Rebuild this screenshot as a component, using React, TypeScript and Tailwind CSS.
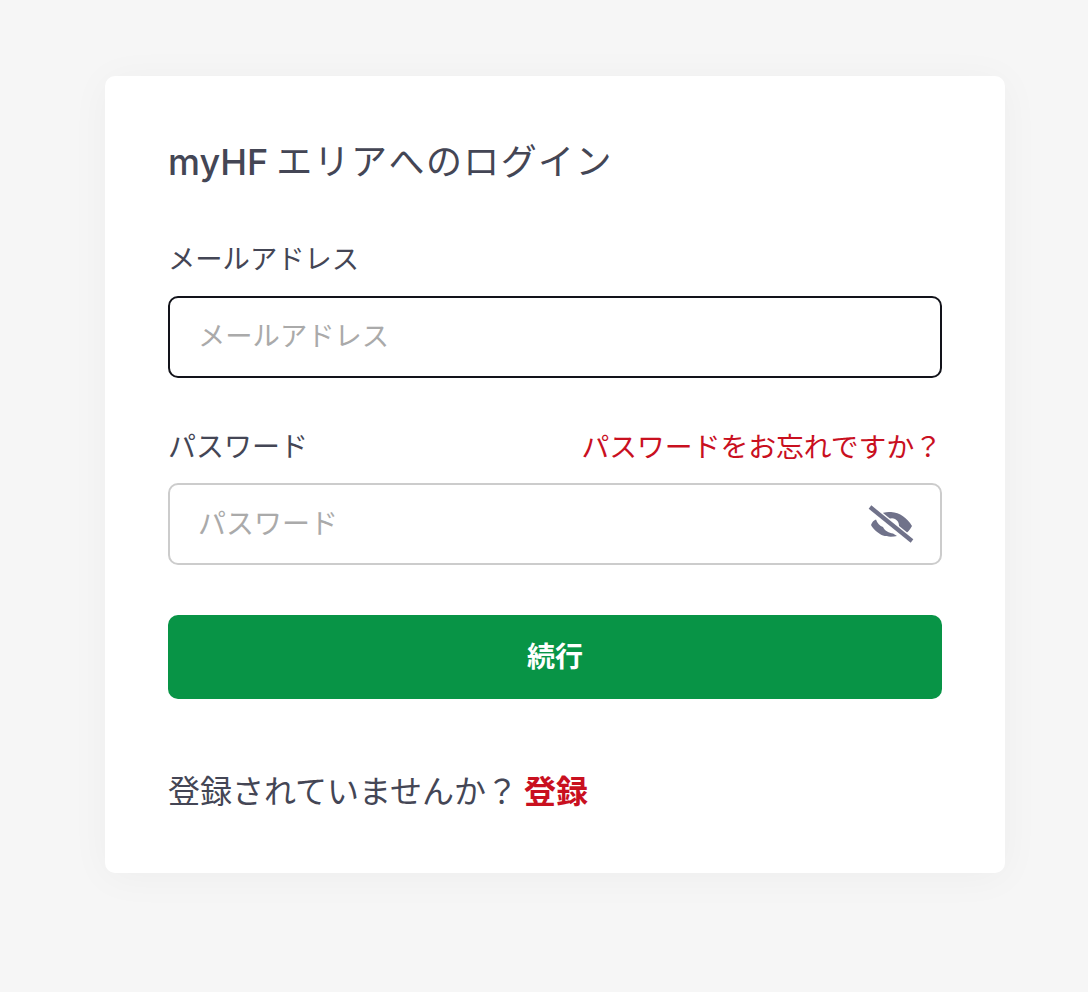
export default function App() {
  return (
    <div className="min-h-[992px] bg-[#f6f6f6] px-[105px] pt-[76px] font-['Inter','Noto_Sans_CJK_JP',sans-serif]">
      <div className="w-[900px] h-[797px] rounded-[10px] bg-white px-[63px] pt-[64px] shadow-[0_4px_40px_rgba(0,0,0,0.04)]">
        <h1 className="flex text-[36px] leading-[44px] font-normal text-[#444655]">
          <span className="font-medium">myHF</span>
          <span className="ml-[8px] tracking-[1.4px]">エリアへのログイン</span>
        </h1>

        <label className="mt-[56px] block text-[27.3px] leading-[40px] text-[#444655]">メールアドレス</label>
        <div className="mt-[16px] flex h-[82px] w-[774px] items-center rounded-[10px] border-2 border-[#12131a] px-[28px] text-[27.3px] text-[#aaaaaa]">
          メールアドレス
        </div>

        <div className="mt-[49px] flex w-[774px] items-center justify-between">
          <span className="text-[28px] leading-[40px] text-[#444655]">パスワード</span>
          <a className="text-[27.8px] leading-[40px] text-[#c9101f]">パスワードをお忘れですか？</a>
        </div>
        <div className="mt-[16px] flex h-[82px] w-[774px] items-center justify-between rounded-[10px] border-2 border-[#cccccc] pl-[28px] pr-[26px] text-[28px] text-[#aaaaaa]">
          <span>パスワード</span>
          <svg width="46" height="40" viewBox="0 0 46 40" fill="none">
            <path
              d="M10 11C14 8.5 19 7.5 23 8C32 8.5 39 14 44 22C42 26 39 29 36 31L30 26C32 22 31 17 27 15C25 14 23 14 21 15C23 16 25 18 25 20L21.5 17.5Z"
              fill="#70728a"
            />
            <path
              d="M3 21C4 18 6 16 8 15.5C9 19 12 22 15 23C17 27 21 29 25 29.5L29 32C25 33 19 33 15 31.5C10 29.5 5 25 3 21Z"
              fill="#70728a"
            />
            <path d="M2 3L44 37" stroke="#fff" strokeWidth="7" />
            <path d="M2 3L44 37" stroke="#70728a" strokeWidth="4.2" />
          </svg>
        </div>

        <button className="mt-[50px] flex h-[84px] w-[774px] items-center justify-center rounded-[10px] bg-[#089446] text-[28px] font-bold text-white">
          続行
        </button>

        <p className="mt-[71px] flex items-center text-[32px] leading-[44px] text-[#444655]">
          登録されていませんか？<span className="ml-[6px] font-bold text-[#c9101f]">登録</span>
        </p>
      </div>
    </div>
  );
}
